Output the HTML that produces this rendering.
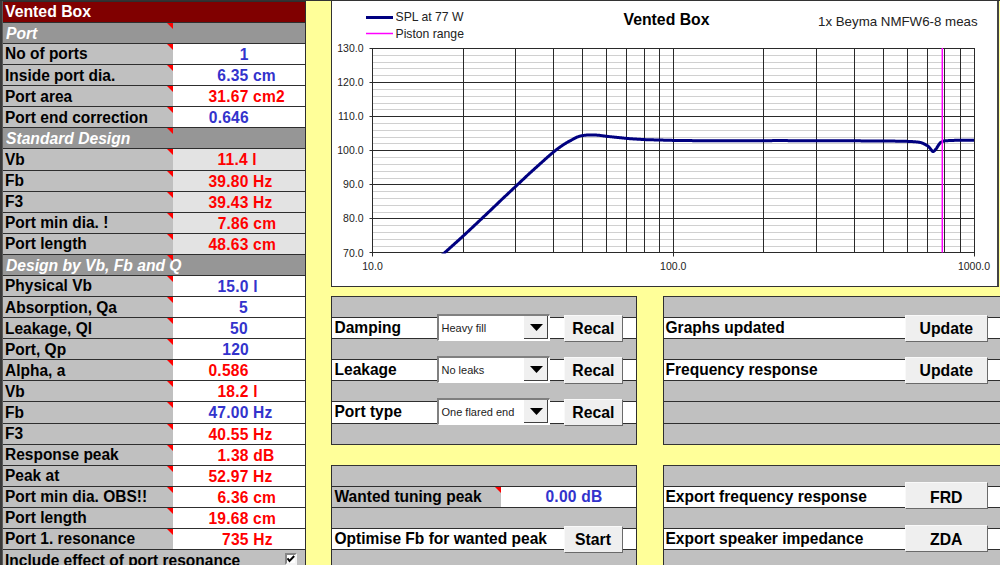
<!DOCTYPE html><html><head><meta charset="utf-8"><style>
html,body{margin:0;padding:0;}
body{width:1000px;height:565px;position:relative;overflow:hidden;background:#ffff99;font-family:"Liberation Sans",sans-serif;}
div,span,svg{position:absolute;}
.t{white-space:nowrap;line-height:1;}
</style></head><body>
<div style="left:306px;top:0px;width:694px;height:565px;background:#ffff99;"></div>
<div style="left:3px;top:1px;width:302px;height:21px;background:#800000;"></div>
<span class="t" style="left:5px;top:4px;font-size:15.8px;color:#fff;font-weight:bold;font-style:normal;">Vented Box</span>
<div style="left:3px;top:1px;width:302px;height:1px;background:#2e2e2e;"></div>
<div style="left:3px;top:22px;width:302px;height:21px;background:#969696;"></div>
<span class="t" style="left:6px;top:26px;font-size:15.65px;color:#fff;font-weight:bold;font-style:italic;transform:scaleY(1.07);transform-origin:0 13px;">Port</span>
<div style="left:167px;top:23px;width:0;height:0;border-top:6px solid #ff0000;border-left:6px solid transparent;"></div>
<div style="left:3px;top:22px;width:302px;height:1px;background:#2e2e2e;"></div>
<div style="left:3px;top:43px;width:170px;height:21px;background:#c0c0c0;"></div>
<div style="left:173px;top:43px;width:132px;height:21px;background:#fff;"></div>
<span class="t" style="left:5px;top:46px;font-size:15.5px;color:#000;font-weight:bold;font-style:normal;transform:scaleY(1.07);transform-origin:0 13px;">No of ports</span>
<span class="t" style="left:239.8px;top:47px;font-size:15.6px;color:#3333cc;font-weight:bold;font-style:normal;transform:scaleY(1.07);transform-origin:0 13px;letter-spacing:0.2px;">1</span>
<div style="left:167px;top:44px;width:0;height:0;border-top:6px solid #ff0000;border-left:6px solid transparent;"></div>
<div style="left:3px;top:43px;width:302px;height:1px;background:#2e2e2e;"></div>
<div style="left:3px;top:64px;width:170px;height:21px;background:#c0c0c0;"></div>
<div style="left:173px;top:64px;width:132px;height:21px;background:#fff;"></div>
<span class="t" style="left:5px;top:68px;font-size:15.5px;color:#000;font-weight:bold;font-style:normal;transform:scaleY(1.07);transform-origin:0 13px;">Inside port dia.</span>
<span class="t" style="left:217.3px;top:68px;font-size:15.6px;color:#3333cc;font-weight:bold;font-style:normal;transform:scaleY(1.07);transform-origin:0 13px;letter-spacing:0.2px;">6.35 cm</span>
<div style="left:167px;top:65px;width:0;height:0;border-top:6px solid #ff0000;border-left:6px solid transparent;"></div>
<div style="left:3px;top:64px;width:302px;height:1px;background:#2e2e2e;"></div>
<div style="left:3px;top:85px;width:170px;height:21px;background:#c0c0c0;"></div>
<div style="left:173px;top:85px;width:132px;height:21px;background:#fff;"></div>
<span class="t" style="left:5px;top:89px;font-size:15.5px;color:#000;font-weight:bold;font-style:normal;transform:scaleY(1.07);transform-origin:0 13px;">Port area</span>
<span class="t" style="left:208.5px;top:89px;font-size:15.6px;color:#ff0000;font-weight:bold;font-style:normal;transform:scaleY(1.07);transform-origin:0 13px;letter-spacing:0.2px;">31.67 cm2</span>
<div style="left:167px;top:86px;width:0;height:0;border-top:6px solid #ff0000;border-left:6px solid transparent;"></div>
<div style="left:3px;top:85px;width:302px;height:1px;background:#2e2e2e;"></div>
<div style="left:3px;top:106px;width:170px;height:21px;background:#c0c0c0;"></div>
<div style="left:173px;top:106px;width:132px;height:21px;background:#fff;"></div>
<span class="t" style="left:5px;top:110px;font-size:15.5px;color:#000;font-weight:bold;font-style:normal;transform:scaleY(1.07);transform-origin:0 13px;">Port end correction</span>
<span class="t" style="left:208.8px;top:110px;font-size:15.6px;color:#3333cc;font-weight:bold;font-style:normal;transform:scaleY(1.07);transform-origin:0 13px;letter-spacing:0.2px;">0.646</span>
<div style="left:167px;top:107px;width:0;height:0;border-top:6px solid #ff0000;border-left:6px solid transparent;"></div>
<div style="left:3px;top:106px;width:302px;height:1px;background:#2e2e2e;"></div>
<div style="left:3px;top:127px;width:302px;height:21px;background:#969696;"></div>
<span class="t" style="left:6px;top:131px;font-size:15.65px;color:#fff;font-weight:bold;font-style:italic;transform:scaleY(1.07);transform-origin:0 13px;">Standard Design</span>
<div style="left:167px;top:128px;width:0;height:0;border-top:6px solid #ff0000;border-left:6px solid transparent;"></div>
<div style="left:3px;top:127px;width:302px;height:1px;background:#2e2e2e;"></div>
<div style="left:3px;top:148px;width:170px;height:22px;background:#c0c0c0;"></div>
<div style="left:173px;top:148px;width:132px;height:22px;background:#e3e3e3;"></div>
<span class="t" style="left:5px;top:152px;font-size:15.5px;color:#000;font-weight:bold;font-style:normal;transform:scaleY(1.07);transform-origin:0 13px;">Vb</span>
<span class="t" style="left:217.5px;top:152px;font-size:15.6px;color:#ff0000;font-weight:bold;font-style:normal;transform:scaleY(1.07);transform-origin:0 13px;letter-spacing:0.2px;">11.4 l</span>
<div style="left:167px;top:149px;width:0;height:0;border-top:6px solid #ff0000;border-left:6px solid transparent;"></div>
<div style="left:3px;top:148px;width:302px;height:1px;background:#2e2e2e;"></div>
<div style="left:3px;top:170px;width:170px;height:21px;background:#c0c0c0;"></div>
<div style="left:173px;top:170px;width:132px;height:21px;background:#e3e3e3;"></div>
<span class="t" style="left:5px;top:173px;font-size:15.5px;color:#000;font-weight:bold;font-style:normal;transform:scaleY(1.07);transform-origin:0 13px;">Fb</span>
<span class="t" style="left:208.5px;top:174px;font-size:15.6px;color:#ff0000;font-weight:bold;font-style:normal;transform:scaleY(1.07);transform-origin:0 13px;letter-spacing:0.2px;">39.80 Hz</span>
<div style="left:167px;top:171px;width:0;height:0;border-top:6px solid #ff0000;border-left:6px solid transparent;"></div>
<div style="left:3px;top:170px;width:302px;height:1px;background:#2e2e2e;"></div>
<div style="left:3px;top:191px;width:170px;height:21px;background:#c0c0c0;"></div>
<div style="left:173px;top:191px;width:132px;height:21px;background:#e3e3e3;"></div>
<span class="t" style="left:5px;top:194px;font-size:15.5px;color:#000;font-weight:bold;font-style:normal;transform:scaleY(1.07);transform-origin:0 13px;">F3</span>
<span class="t" style="left:208.5px;top:195px;font-size:15.6px;color:#ff0000;font-weight:bold;font-style:normal;transform:scaleY(1.07);transform-origin:0 13px;letter-spacing:0.2px;">39.43 Hz</span>
<div style="left:167px;top:192px;width:0;height:0;border-top:6px solid #ff0000;border-left:6px solid transparent;"></div>
<div style="left:3px;top:191px;width:302px;height:1px;background:#2e2e2e;"></div>
<div style="left:3px;top:212px;width:170px;height:21px;background:#c0c0c0;"></div>
<div style="left:173px;top:212px;width:132px;height:21px;background:#e3e3e3;"></div>
<span class="t" style="left:5px;top:215px;font-size:15.5px;color:#000;font-weight:bold;font-style:normal;transform:scaleY(1.07);transform-origin:0 13px;">Port min dia. !</span>
<span class="t" style="left:217.70000000000002px;top:216px;font-size:15.6px;color:#ff0000;font-weight:bold;font-style:normal;transform:scaleY(1.07);transform-origin:0 13px;letter-spacing:0.2px;">7.86 cm</span>
<div style="left:167px;top:213px;width:0;height:0;border-top:6px solid #ff0000;border-left:6px solid transparent;"></div>
<div style="left:3px;top:212px;width:302px;height:1px;background:#2e2e2e;"></div>
<div style="left:3px;top:233px;width:170px;height:21px;background:#c0c0c0;"></div>
<div style="left:173px;top:233px;width:132px;height:21px;background:#e3e3e3;"></div>
<span class="t" style="left:5px;top:236px;font-size:15.5px;color:#000;font-weight:bold;font-style:normal;transform:scaleY(1.07);transform-origin:0 13px;">Port length</span>
<span class="t" style="left:208.5px;top:237px;font-size:15.6px;color:#ff0000;font-weight:bold;font-style:normal;transform:scaleY(1.07);transform-origin:0 13px;letter-spacing:0.2px;">48.63 cm</span>
<div style="left:167px;top:234px;width:0;height:0;border-top:6px solid #ff0000;border-left:6px solid transparent;"></div>
<div style="left:3px;top:233px;width:302px;height:1px;background:#2e2e2e;"></div>
<div style="left:3px;top:254px;width:302px;height:21px;background:#969696;"></div>
<span class="t" style="left:6px;top:258px;font-size:15.65px;color:#fff;font-weight:bold;font-style:italic;transform:scaleY(1.07);transform-origin:0 13px;">Design by Vb, Fb and Q</span>
<div style="left:167px;top:255px;width:0;height:0;border-top:6px solid #ff0000;border-left:6px solid transparent;"></div>
<div style="left:3px;top:254px;width:302px;height:1px;background:#2e2e2e;"></div>
<div style="left:3px;top:275px;width:170px;height:21px;background:#c0c0c0;"></div>
<div style="left:173px;top:275px;width:132px;height:21px;background:#fff;"></div>
<span class="t" style="left:5px;top:278px;font-size:15.5px;color:#000;font-weight:bold;font-style:normal;transform:scaleY(1.07);transform-origin:0 13px;">Physical Vb</span>
<span class="t" style="left:217.5px;top:279px;font-size:15.6px;color:#3333cc;font-weight:bold;font-style:normal;transform:scaleY(1.07);transform-origin:0 13px;letter-spacing:0.2px;">15.0 l</span>
<div style="left:167px;top:276px;width:0;height:0;border-top:6px solid #ff0000;border-left:6px solid transparent;"></div>
<div style="left:3px;top:275px;width:302px;height:1px;background:#2e2e2e;"></div>
<div style="left:3px;top:296px;width:170px;height:21px;background:#c0c0c0;"></div>
<div style="left:173px;top:296px;width:132px;height:21px;background:#fff;"></div>
<span class="t" style="left:5px;top:300px;font-size:15.5px;color:#000;font-weight:bold;font-style:normal;transform:scaleY(1.07);transform-origin:0 13px;">Absorption, Qa</span>
<span class="t" style="left:238.9px;top:300px;font-size:15.6px;color:#3333cc;font-weight:bold;font-style:normal;transform:scaleY(1.07);transform-origin:0 13px;letter-spacing:0.2px;">5</span>
<div style="left:167px;top:297px;width:0;height:0;border-top:6px solid #ff0000;border-left:6px solid transparent;"></div>
<div style="left:3px;top:296px;width:302px;height:1px;background:#2e2e2e;"></div>
<div style="left:3px;top:317px;width:170px;height:21px;background:#c0c0c0;"></div>
<div style="left:173px;top:317px;width:132px;height:21px;background:#fff;"></div>
<span class="t" style="left:5px;top:321px;font-size:15.5px;color:#000;font-weight:bold;font-style:normal;transform:scaleY(1.07);transform-origin:0 13px;">Leakage, Ql</span>
<span class="t" style="left:230.10000000000002px;top:321px;font-size:15.6px;color:#3333cc;font-weight:bold;font-style:normal;transform:scaleY(1.07);transform-origin:0 13px;letter-spacing:0.2px;">50</span>
<div style="left:167px;top:318px;width:0;height:0;border-top:6px solid #ff0000;border-left:6px solid transparent;"></div>
<div style="left:3px;top:317px;width:302px;height:1px;background:#2e2e2e;"></div>
<div style="left:3px;top:338px;width:170px;height:21px;background:#c0c0c0;"></div>
<div style="left:173px;top:338px;width:132px;height:21px;background:#fff;"></div>
<span class="t" style="left:5px;top:342px;font-size:15.5px;color:#000;font-weight:bold;font-style:normal;transform:scaleY(1.07);transform-origin:0 13px;">Port, Qp</span>
<span class="t" style="left:222.3px;top:342px;font-size:15.6px;color:#3333cc;font-weight:bold;font-style:normal;transform:scaleY(1.07);transform-origin:0 13px;letter-spacing:0.2px;">120</span>
<div style="left:167px;top:339px;width:0;height:0;border-top:6px solid #ff0000;border-left:6px solid transparent;"></div>
<div style="left:3px;top:338px;width:302px;height:1px;background:#2e2e2e;"></div>
<div style="left:3px;top:359px;width:170px;height:21px;background:#c0c0c0;"></div>
<div style="left:173px;top:359px;width:132px;height:21px;background:#fff;"></div>
<span class="t" style="left:5px;top:363px;font-size:15.5px;color:#000;font-weight:bold;font-style:normal;transform:scaleY(1.07);transform-origin:0 13px;">Alpha, a</span>
<span class="t" style="left:208.5px;top:363px;font-size:15.6px;color:#ff0000;font-weight:bold;font-style:normal;transform:scaleY(1.07);transform-origin:0 13px;letter-spacing:0.2px;">0.586</span>
<div style="left:167px;top:360px;width:0;height:0;border-top:6px solid #ff0000;border-left:6px solid transparent;"></div>
<div style="left:3px;top:359px;width:302px;height:1px;background:#2e2e2e;"></div>
<div style="left:3px;top:380px;width:170px;height:21px;background:#c0c0c0;"></div>
<div style="left:173px;top:380px;width:132px;height:21px;background:#fff;"></div>
<span class="t" style="left:5px;top:384px;font-size:15.5px;color:#000;font-weight:bold;font-style:normal;transform:scaleY(1.07);transform-origin:0 13px;">Vb</span>
<span class="t" style="left:217.5px;top:384px;font-size:15.6px;color:#ff0000;font-weight:bold;font-style:normal;transform:scaleY(1.07);transform-origin:0 13px;letter-spacing:0.2px;">18.2 l</span>
<div style="left:167px;top:381px;width:0;height:0;border-top:6px solid #ff0000;border-left:6px solid transparent;"></div>
<div style="left:3px;top:380px;width:302px;height:1px;background:#2e2e2e;"></div>
<div style="left:3px;top:401px;width:170px;height:22px;background:#c0c0c0;"></div>
<div style="left:173px;top:401px;width:132px;height:22px;background:#fff;"></div>
<span class="t" style="left:5px;top:405px;font-size:15.5px;color:#000;font-weight:bold;font-style:normal;transform:scaleY(1.07);transform-origin:0 13px;">Fb</span>
<span class="t" style="left:208.5px;top:405px;font-size:15.6px;color:#3333cc;font-weight:bold;font-style:normal;transform:scaleY(1.07);transform-origin:0 13px;letter-spacing:0.2px;">47.00 Hz</span>
<div style="left:167px;top:402px;width:0;height:0;border-top:6px solid #ff0000;border-left:6px solid transparent;"></div>
<div style="left:3px;top:401px;width:302px;height:1px;background:#2e2e2e;"></div>
<div style="left:3px;top:423px;width:170px;height:21px;background:#c0c0c0;"></div>
<div style="left:173px;top:423px;width:132px;height:21px;background:#fff;"></div>
<span class="t" style="left:5px;top:426px;font-size:15.5px;color:#000;font-weight:bold;font-style:normal;transform:scaleY(1.07);transform-origin:0 13px;">F3</span>
<span class="t" style="left:208.5px;top:427px;font-size:15.6px;color:#ff0000;font-weight:bold;font-style:normal;transform:scaleY(1.07);transform-origin:0 13px;letter-spacing:0.2px;">40.55 Hz</span>
<div style="left:167px;top:424px;width:0;height:0;border-top:6px solid #ff0000;border-left:6px solid transparent;"></div>
<div style="left:3px;top:423px;width:302px;height:1px;background:#2e2e2e;"></div>
<div style="left:3px;top:444px;width:170px;height:21px;background:#c0c0c0;"></div>
<div style="left:173px;top:444px;width:132px;height:21px;background:#fff;"></div>
<span class="t" style="left:5px;top:447px;font-size:15.5px;color:#000;font-weight:bold;font-style:normal;transform:scaleY(1.07);transform-origin:0 13px;">Response peak</span>
<span class="t" style="left:217.5px;top:448px;font-size:15.6px;color:#ff0000;font-weight:bold;font-style:normal;transform:scaleY(1.07);transform-origin:0 13px;letter-spacing:0.2px;">1.38 dB</span>
<div style="left:167px;top:445px;width:0;height:0;border-top:6px solid #ff0000;border-left:6px solid transparent;"></div>
<div style="left:3px;top:444px;width:302px;height:1px;background:#2e2e2e;"></div>
<div style="left:3px;top:465px;width:170px;height:21px;background:#c0c0c0;"></div>
<div style="left:173px;top:465px;width:132px;height:21px;background:#fff;"></div>
<span class="t" style="left:5px;top:468px;font-size:15.5px;color:#000;font-weight:bold;font-style:normal;transform:scaleY(1.07);transform-origin:0 13px;">Peak at</span>
<span class="t" style="left:208.5px;top:469px;font-size:15.6px;color:#ff0000;font-weight:bold;font-style:normal;transform:scaleY(1.07);transform-origin:0 13px;letter-spacing:0.2px;">52.97 Hz</span>
<div style="left:167px;top:466px;width:0;height:0;border-top:6px solid #ff0000;border-left:6px solid transparent;"></div>
<div style="left:3px;top:465px;width:302px;height:1px;background:#2e2e2e;"></div>
<div style="left:3px;top:486px;width:170px;height:21px;background:#c0c0c0;"></div>
<div style="left:173px;top:486px;width:132px;height:21px;background:#fff;"></div>
<span class="t" style="left:5px;top:489px;font-size:15.5px;color:#000;font-weight:bold;font-style:normal;transform:scaleY(1.07);transform-origin:0 13px;">Port min dia. OBS!!</span>
<span class="t" style="left:217.5px;top:490px;font-size:15.6px;color:#ff0000;font-weight:bold;font-style:normal;transform:scaleY(1.07);transform-origin:0 13px;letter-spacing:0.2px;">6.36 cm</span>
<div style="left:167px;top:487px;width:0;height:0;border-top:6px solid #ff0000;border-left:6px solid transparent;"></div>
<div style="left:3px;top:486px;width:302px;height:1px;background:#2e2e2e;"></div>
<div style="left:3px;top:507px;width:170px;height:21px;background:#c0c0c0;"></div>
<div style="left:173px;top:507px;width:132px;height:21px;background:#fff;"></div>
<span class="t" style="left:5px;top:510px;font-size:15.5px;color:#000;font-weight:bold;font-style:normal;transform:scaleY(1.07);transform-origin:0 13px;">Port length</span>
<span class="t" style="left:208.5px;top:511px;font-size:15.6px;color:#ff0000;font-weight:bold;font-style:normal;transform:scaleY(1.07);transform-origin:0 13px;letter-spacing:0.2px;">19.68 cm</span>
<div style="left:167px;top:508px;width:0;height:0;border-top:6px solid #ff0000;border-left:6px solid transparent;"></div>
<div style="left:3px;top:507px;width:302px;height:1px;background:#2e2e2e;"></div>
<div style="left:3px;top:528px;width:170px;height:21px;background:#c0c0c0;"></div>
<div style="left:173px;top:528px;width:132px;height:21px;background:#fff;"></div>
<span class="t" style="left:5px;top:531px;font-size:15.5px;color:#000;font-weight:bold;font-style:normal;transform:scaleY(1.07);transform-origin:0 13px;">Port 1. resonance</span>
<span class="t" style="left:222.10000000000002px;top:532px;font-size:15.6px;color:#ff0000;font-weight:bold;font-style:normal;transform:scaleY(1.07);transform-origin:0 13px;letter-spacing:0.2px;">735 Hz</span>
<div style="left:167px;top:529px;width:0;height:0;border-top:6px solid #ff0000;border-left:6px solid transparent;"></div>
<div style="left:3px;top:528px;width:302px;height:1px;background:#2e2e2e;"></div>
<div style="left:3px;top:549px;width:302px;height:16px;background:#c0c0c0;"></div>
<span class="t" style="left:5px;top:553px;font-size:15.5px;color:#000;font-weight:bold;font-style:normal;transform:scaleY(1.07);transform-origin:0 13px;">Include effect of port resonance</span>
<div style="left:285px;top:553px;width:8px;height:8px;background:#fff;border-top:2px solid #858585;border-left:2px solid #858585;border-right:2px solid #f4f4f4;border-bottom:2px solid #f4f4f4;"></div>
<svg style="left:287px;top:555px" width="10" height="10" viewBox="0 0 10 10"><path d="M0.5 3.3 L2.5 6.0 L7.2 1.0" stroke="#000" stroke-width="1.9" fill="none"/></svg>
<div style="left:3px;top:549px;width:302px;height:1px;background:#2e2e2e;"></div>
<div style="left:305px;top:0px;width:1px;height:565px;background:#2e2e2e;"></div>
<div style="left:0px;top:0px;width:2px;height:565px;background:#3a3a3a;"></div>
<div style="left:2px;top:0px;width:1px;height:565px;background:#5a5a5a;"></div>
<div style="left:331px;top:0px;width:665px;height:285px;background:#fff;border:1px solid #333;border-right:2px solid #444;"></div>
<svg style="left:0;top:0" width="1000" height="300" viewBox="0 0 1000 300"><line x1="372.5" y1="246.5" x2="974.0" y2="246.5" stroke="#d0d0d0" stroke-width="1"/><line x1="372.5" y1="239.5" x2="974.0" y2="239.5" stroke="#d0d0d0" stroke-width="1"/><line x1="372.5" y1="232.5" x2="974.0" y2="232.5" stroke="#d0d0d0" stroke-width="1"/><line x1="372.5" y1="225.5" x2="974.0" y2="225.5" stroke="#d0d0d0" stroke-width="1"/><line x1="372.5" y1="212.5" x2="974.0" y2="212.5" stroke="#d0d0d0" stroke-width="1"/><line x1="372.5" y1="205.5" x2="974.0" y2="205.5" stroke="#d0d0d0" stroke-width="1"/><line x1="372.5" y1="198.5" x2="974.0" y2="198.5" stroke="#d0d0d0" stroke-width="1"/><line x1="372.5" y1="191.5" x2="974.0" y2="191.5" stroke="#d0d0d0" stroke-width="1"/><line x1="372.5" y1="178.5" x2="974.0" y2="178.5" stroke="#d0d0d0" stroke-width="1"/><line x1="372.5" y1="171.5" x2="974.0" y2="171.5" stroke="#d0d0d0" stroke-width="1"/><line x1="372.5" y1="164.5" x2="974.0" y2="164.5" stroke="#d0d0d0" stroke-width="1"/><line x1="372.5" y1="157.5" x2="974.0" y2="157.5" stroke="#d0d0d0" stroke-width="1"/><line x1="372.5" y1="143.5" x2="974.0" y2="143.5" stroke="#d0d0d0" stroke-width="1"/><line x1="372.5" y1="137.5" x2="974.0" y2="137.5" stroke="#d0d0d0" stroke-width="1"/><line x1="372.5" y1="130.5" x2="974.0" y2="130.5" stroke="#d0d0d0" stroke-width="1"/><line x1="372.5" y1="123.5" x2="974.0" y2="123.5" stroke="#d0d0d0" stroke-width="1"/><line x1="372.5" y1="109.5" x2="974.0" y2="109.5" stroke="#d0d0d0" stroke-width="1"/><line x1="372.5" y1="103.5" x2="974.0" y2="103.5" stroke="#d0d0d0" stroke-width="1"/><line x1="372.5" y1="96.5" x2="974.0" y2="96.5" stroke="#d0d0d0" stroke-width="1"/><line x1="372.5" y1="89.5" x2="974.0" y2="89.5" stroke="#d0d0d0" stroke-width="1"/><line x1="372.5" y1="75.5" x2="974.0" y2="75.5" stroke="#d0d0d0" stroke-width="1"/><line x1="372.5" y1="68.5" x2="974.0" y2="68.5" stroke="#d0d0d0" stroke-width="1"/><line x1="372.5" y1="62.5" x2="974.0" y2="62.5" stroke="#d0d0d0" stroke-width="1"/><line x1="372.5" y1="55.5" x2="974.0" y2="55.5" stroke="#d0d0d0" stroke-width="1"/><line x1="369.5" y1="252.5" x2="974.0" y2="252.5" stroke="#2a2a2a" stroke-width="1"/><line x1="369.5" y1="218.5" x2="974.0" y2="218.5" stroke="#2a2a2a" stroke-width="1"/><line x1="369.5" y1="184.5" x2="974.0" y2="184.5" stroke="#2a2a2a" stroke-width="1"/><line x1="369.5" y1="150.5" x2="974.0" y2="150.5" stroke="#2a2a2a" stroke-width="1"/><line x1="369.5" y1="116.5" x2="974.0" y2="116.5" stroke="#2a2a2a" stroke-width="1"/><line x1="369.5" y1="82.5" x2="974.0" y2="82.5" stroke="#2a2a2a" stroke-width="1"/><line x1="369.5" y1="48.5" x2="974.0" y2="48.5" stroke="#2a2a2a" stroke-width="1"/><line x1="372.5" y1="48.0" x2="372.5" y2="256.5" stroke="#2a2a2a" stroke-width="1"/><line x1="463.5" y1="48.0" x2="463.5" y2="252.5" stroke="#2a2a2a" stroke-width="1"/><line x1="515.5" y1="48.0" x2="515.5" y2="252.5" stroke="#2a2a2a" stroke-width="1"/><line x1="553.5" y1="48.0" x2="553.5" y2="252.5" stroke="#2a2a2a" stroke-width="1"/><line x1="582.5" y1="48.0" x2="582.5" y2="252.5" stroke="#2a2a2a" stroke-width="1"/><line x1="606.5" y1="48.0" x2="606.5" y2="252.5" stroke="#2a2a2a" stroke-width="1"/><line x1="626.5" y1="48.0" x2="626.5" y2="252.5" stroke="#2a2a2a" stroke-width="1"/><line x1="644.5" y1="48.0" x2="644.5" y2="252.5" stroke="#2a2a2a" stroke-width="1"/><line x1="659.5" y1="48.0" x2="659.5" y2="252.5" stroke="#2a2a2a" stroke-width="1"/><line x1="673.5" y1="48.0" x2="673.5" y2="256.5" stroke="#2a2a2a" stroke-width="1"/><line x1="763.5" y1="48.0" x2="763.5" y2="252.5" stroke="#2a2a2a" stroke-width="1"/><line x1="816.5" y1="48.0" x2="816.5" y2="252.5" stroke="#2a2a2a" stroke-width="1"/><line x1="854.5" y1="48.0" x2="854.5" y2="252.5" stroke="#2a2a2a" stroke-width="1"/><line x1="883.5" y1="48.0" x2="883.5" y2="252.5" stroke="#2a2a2a" stroke-width="1"/><line x1="907.5" y1="48.0" x2="907.5" y2="252.5" stroke="#2a2a2a" stroke-width="1"/><line x1="927.5" y1="48.0" x2="927.5" y2="252.5" stroke="#2a2a2a" stroke-width="1"/><line x1="944.5" y1="48.0" x2="944.5" y2="252.5" stroke="#2a2a2a" stroke-width="1"/><line x1="960.5" y1="48.0" x2="960.5" y2="252.5" stroke="#2a2a2a" stroke-width="1"/><line x1="974.5" y1="48.0" x2="974.5" y2="256.5" stroke="#2a2a2a" stroke-width="1"/><defs><clipPath id="pc"><rect x="372" y="40" width="603" height="213.5"/></clipPath></defs><path d="M442.0,255.10 L442.5,254.65 L443.0,254.20 L443.5,253.75 L444.0,253.30 L444.5,252.86 L445.0,252.41 L445.5,251.96 L446.0,251.51 L446.5,251.06 L447.0,250.61 L447.5,250.16 L448.0,249.71 L448.5,249.27 L449.0,248.82 L449.5,248.37 L450.0,247.92 L450.5,247.47 L451.0,247.02 L451.5,246.57 L452.0,246.12 L452.5,245.67 L453.0,245.23 L453.5,244.78 L454.0,244.33 L454.5,243.88 L455.0,243.43 L455.5,242.98 L456.0,242.53 L456.5,242.08 L457.0,241.63 L457.5,241.18 L458.0,240.73 L458.5,240.28 L459.0,239.83 L459.5,239.38 L460.0,238.93 L460.5,238.48 L461.0,238.03 L461.5,237.58 L462.0,237.13 L462.5,236.68 L463.0,236.22 L463.5,235.75 L464.0,235.28 L464.5,234.81 L465.0,234.35 L465.5,233.88 L466.0,233.41 L466.5,232.94 L467.0,232.47 L467.5,232.00 L468.0,231.53 L468.5,231.06 L469.0,230.59 L469.5,230.13 L470.0,229.66 L470.5,229.19 L471.0,228.72 L471.5,228.25 L472.0,227.78 L472.5,227.31 L473.0,226.84 L473.5,226.37 L474.0,225.90 L474.5,225.43 L475.0,224.96 L475.5,224.48 L476.0,224.01 L476.5,223.54 L477.0,223.07 L477.5,222.60 L478.0,222.13 L478.5,221.66 L479.0,221.19 L479.5,220.71 L480.0,220.24 L480.5,219.77 L481.0,219.30 L481.5,218.82 L482.0,218.35 L482.5,217.88 L483.0,217.41 L483.5,216.93 L484.0,216.46 L484.5,215.99 L485.0,215.51 L485.5,215.04 L486.0,214.56 L486.5,214.09 L487.0,213.61 L487.5,213.14 L488.0,212.66 L488.5,212.19 L489.0,211.71 L489.5,211.24 L490.0,210.76 L490.5,210.29 L491.0,209.81 L491.5,209.33 L492.0,208.86 L492.5,208.38 L493.0,207.90 L493.5,207.43 L494.0,206.95 L494.5,206.47 L495.0,205.99 L495.5,205.51 L496.0,205.04 L496.5,204.56 L497.0,204.08 L497.5,203.60 L498.0,203.12 L498.5,202.64 L499.0,202.16 L499.5,201.68 L500.0,201.20 L500.5,200.72 L501.0,200.23 L501.5,199.75 L502.0,199.27 L502.5,198.79 L503.0,198.31 L503.5,197.85 L504.0,197.38 L504.5,196.91 L505.0,196.45 L505.5,195.98 L506.0,195.51 L506.5,195.04 L507.0,194.57 L507.5,194.10 L508.0,193.64 L508.5,193.17 L509.0,192.70 L509.5,192.23 L510.0,191.76 L510.5,191.28 L511.0,190.81 L511.5,190.34 L512.0,189.87 L512.5,189.40 L513.0,188.93 L513.5,188.45 L514.0,187.98 L514.5,187.51 L515.0,187.03 L515.5,186.56 L516.0,186.08 L516.5,185.61 L517.0,185.15 L517.5,184.68 L518.0,184.21 L518.5,183.74 L519.0,183.27 L519.5,182.80 L520.0,182.33 L520.5,181.86 L521.0,181.39 L521.5,180.92 L522.0,180.45 L522.5,179.98 L523.0,179.51 L523.5,179.04 L524.0,178.56 L524.5,178.09 L525.0,177.62 L525.5,177.15 L526.0,176.68 L526.5,176.20 L527.0,175.73 L527.5,175.26 L528.0,174.78 L528.5,174.32 L529.0,173.87 L529.5,173.41 L530.0,172.96 L530.5,172.51 L531.0,172.05 L531.5,171.60 L532.0,171.15 L532.5,170.69 L533.0,170.24 L533.5,169.79 L534.0,169.34 L534.5,168.88 L535.0,168.43 L535.5,167.98 L536.0,167.53 L536.5,167.07 L537.0,166.62 L537.5,166.17 L538.0,165.72 L538.5,165.27 L539.0,164.82 L539.5,164.38 L540.0,163.93 L540.5,163.48 L541.0,163.03 L541.5,162.59 L542.0,162.14 L542.5,161.70 L543.0,161.24 L543.5,160.79 L544.0,160.33 L544.5,159.88 L545.0,159.43 L545.5,158.98 L546.0,158.53 L546.5,158.08 L547.0,157.64 L547.5,157.19 L548.0,156.75 L548.5,156.31 L549.0,155.87 L549.5,155.44 L550.0,155.01 L550.5,154.57 L551.0,154.15 L551.5,153.72 L552.0,153.30 L552.5,152.88 L553.0,152.46 L553.5,152.05 L554.0,151.64 L554.5,151.24 L555.0,150.84 L555.5,150.44 L556.0,150.05 L556.5,149.66 L557.0,149.28 L557.5,148.90 L558.0,148.52 L558.5,148.15 L559.0,147.79 L559.5,147.43 L560.0,147.07 L560.5,146.72 L561.0,146.37 L561.5,146.03 L562.0,145.70 L562.5,145.36 L563.0,145.02 L563.5,144.68 L564.0,144.35 L564.5,144.03 L565.0,143.71 L565.5,143.39 L566.0,143.09 L566.5,142.79 L567.0,142.50 L567.5,142.21 L568.0,141.93 L568.5,141.66 L569.0,141.40 L569.5,141.14 L570.0,140.89 L570.5,140.64 L571.0,140.38 L571.5,140.07 L572.0,139.78 L572.5,139.49 L573.0,139.21 L573.5,138.94 L574.0,138.67 L574.5,138.41 L575.0,138.16 L575.5,137.91 L576.0,137.67 L576.5,137.44 L577.0,137.21 L577.5,136.99 L578.0,136.78 L578.5,136.58 L579.0,136.38 L579.5,136.23 L580.0,136.11 L580.5,136.00 L581.0,135.89 L581.5,135.79 L582.0,135.70 L582.5,135.61 L583.0,135.53 L583.5,135.45 L584.0,135.38 L584.5,135.31 L585.0,135.25 L585.5,135.19 L586.0,135.14 L586.5,135.09 L587.0,135.04 L587.5,135.00 L588.0,134.97 L588.5,134.93 L589.0,134.91 L589.5,134.90 L590.0,134.89 L590.5,134.89 L591.0,134.90 L591.5,134.91 L592.0,134.92 L592.5,134.93 L593.0,134.94 L593.5,134.96 L594.0,134.98 L594.5,135.01 L595.0,135.03 L595.5,135.06 L596.0,135.09 L596.5,135.12 L597.0,135.15 L597.5,135.19 L598.0,135.22 L598.5,135.26 L599.0,135.30 L599.5,135.36 L600.0,135.42 L600.5,135.49 L601.0,135.55 L601.5,135.62 L602.0,135.68 L602.5,135.75 L603.0,135.82 L603.5,135.89 L604.0,135.96 L604.5,136.03 L605.0,136.10 L605.5,136.17 L606.0,136.24 L606.5,136.31 L607.0,136.36 L607.5,136.41 L608.0,136.46 L608.5,136.51 L609.0,136.56 L609.5,136.62 L610.0,136.67 L610.5,136.72 L611.0,136.77 L611.5,136.82 L612.0,136.88 L612.5,136.93 L613.0,136.98 L613.5,137.03 L614.0,137.09 L614.5,137.14 L615.0,137.19 L615.5,137.24 L616.0,137.29 L616.5,137.34 L617.0,137.40 L617.5,137.45 L618.0,137.50 L618.5,137.55 L619.0,137.60 L619.5,137.65 L620.0,137.70 L620.5,137.75 L621.0,137.81 L621.5,137.86 L622.0,137.92 L622.5,137.97 L623.0,138.02 L623.5,138.08 L624.0,138.13 L624.5,138.18 L625.0,138.24 L625.5,138.29 L626.0,138.34 L626.5,138.39 L627.0,138.43 L627.5,138.47 L628.0,138.51 L628.5,138.55 L629.0,138.59 L629.5,138.63 L630.0,138.66 L630.5,138.70 L631.0,138.74 L631.5,138.78 L632.0,138.81 L632.5,138.85 L633.0,138.88 L633.5,138.92 L634.0,138.95 L634.5,138.99 L635.0,139.02 L635.5,139.06 L636.0,139.09 L636.5,139.12 L637.0,139.16 L637.5,139.19 L638.0,139.22 L638.5,139.25 L639.0,139.28 L639.5,139.31 L640.0,139.34 L640.5,139.37 L641.0,139.40 L641.5,139.43 L642.0,139.46 L642.5,139.49 L643.0,139.52 L643.5,139.55 L644.0,139.58 L644.5,139.60 L645.0,139.62 L645.5,139.64 L646.0,139.65 L646.5,139.67 L647.0,139.69 L647.5,139.70 L648.0,139.72 L648.5,139.73 L649.0,139.75 L649.5,139.76 L650.0,139.78 L650.5,139.79 L651.0,139.81 L651.5,139.82 L652.0,139.83 L652.5,139.84 L653.0,139.86 L653.5,139.87 L654.0,139.88 L654.5,139.89 L655.0,139.91 L655.5,139.92 L656.0,139.93 L656.5,139.94 L657.0,139.95 L657.5,139.96 L658.0,139.97 L658.5,139.98 L659.0,139.99 L659.5,140.00 L660.0,140.01 L660.5,140.03 L661.0,140.05 L661.5,140.06 L662.0,140.08 L662.5,140.10 L663.0,140.11 L663.5,140.13 L664.0,140.14 L664.5,140.16 L665.0,140.17 L665.5,140.19 L666.0,140.20 L666.5,140.22 L667.0,140.23 L667.5,140.25 L668.0,140.26 L668.5,140.27 L669.0,140.29 L669.5,140.30 L670.0,140.31 L670.5,140.33 L671.0,140.34 L671.5,140.35 L672.0,140.37 L672.5,140.38 L673.0,140.39 L673.5,140.40 L674.0,140.41 L674.5,140.42 L675.0,140.43 L675.5,140.43 L676.0,140.44 L676.5,140.45 L677.0,140.46 L677.5,140.46 L678.0,140.47 L678.5,140.48 L679.0,140.49 L679.5,140.49 L680.0,140.50 L680.5,140.51 L681.0,140.51 L681.5,140.52 L682.0,140.52 L682.5,140.53 L683.0,140.54 L683.5,140.54 L684.0,140.55 L684.5,140.55 L685.0,140.56 L685.5,140.56 L686.0,140.57 L686.5,140.57 L687.0,140.58 L687.5,140.58 L688.0,140.59 L688.5,140.59 L689.0,140.60 L689.5,140.60 L690.0,140.61 L690.5,140.61 L691.0,140.61 L691.5,140.62 L692.0,140.62 L692.5,140.63 L693.0,140.63 L693.5,140.63 L694.0,140.64 L694.5,140.64 L695.0,140.64 L695.5,140.65 L696.0,140.65 L696.5,140.65 L697.0,140.66 L697.5,140.66 L698.0,140.66 L698.5,140.66 L699.0,140.67 L699.5,140.67 L700.0,140.67 L700.5,140.67 L701.0,140.68 L701.5,140.68 L702.0,140.68 L702.5,140.68 L703.0,140.69 L703.5,140.69 L704.0,140.69 L704.5,140.69 L705.0,140.69 L705.5,140.70 L706.0,140.70 L706.5,140.70 L707.0,140.70 L707.5,140.70 L708.0,140.70 L708.5,140.70 L709.0,140.71 L709.5,140.71 L710.0,140.71 L710.5,140.71 L711.0,140.71 L711.5,140.71 L712.0,140.71 L712.5,140.71 L713.0,140.71 L713.5,140.72 L714.0,140.72 L714.5,140.72 L715.0,140.72 L715.5,140.72 L716.0,140.72 L716.5,140.72 L717.0,140.72 L717.5,140.72 L718.0,140.72 L718.5,140.72 L719.0,140.72 L719.5,140.72 L720.0,140.72 L720.5,140.72 L721.0,140.72 L721.5,140.72 L722.0,140.72 L722.5,140.72 L723.0,140.72 L723.5,140.72 L724.0,140.72 L724.5,140.72 L725.0,140.72 L725.5,140.72 L726.0,140.72 L726.5,140.72 L727.0,140.72 L727.5,140.72 L728.0,140.72 L728.5,140.72 L729.0,140.72 L729.5,140.72 L730.0,140.72 L730.5,140.72 L731.0,140.72 L731.5,140.72 L732.0,140.72 L732.5,140.72 L733.0,140.72 L733.5,140.72 L734.0,140.72 L734.5,140.72 L735.0,140.72 L735.5,140.71 L736.0,140.71 L736.5,140.71 L737.0,140.71 L737.5,140.71 L738.0,140.71 L738.5,140.71 L739.0,140.71 L739.5,140.71 L740.0,140.71 L740.5,140.71 L741.0,140.71 L741.5,140.71 L742.0,140.70 L742.5,140.70 L743.0,140.70 L743.5,140.70 L744.0,140.70 L744.5,140.70 L745.0,140.70 L745.5,140.70 L746.0,140.70 L746.5,140.70 L747.0,140.69 L747.5,140.69 L748.0,140.69 L748.5,140.69 L749.0,140.69 L749.5,140.69 L750.0,140.69 L750.5,140.69 L751.0,140.68 L751.5,140.68 L752.0,140.68 L752.5,140.68 L753.0,140.68 L753.5,140.68 L754.0,140.68 L754.5,140.68 L755.0,140.67 L755.5,140.67 L756.0,140.67 L756.5,140.67 L757.0,140.67 L757.5,140.67 L758.0,140.67 L758.5,140.67 L759.0,140.66 L759.5,140.66 L760.0,140.66 L760.5,140.66 L761.0,140.66 L761.5,140.66 L762.0,140.66 L762.5,140.65 L763.0,140.65 L763.5,140.65 L764.0,140.65 L764.5,140.65 L765.0,140.65 L765.5,140.65 L766.0,140.64 L766.5,140.64 L767.0,140.64 L767.5,140.64 L768.0,140.64 L768.5,140.64 L769.0,140.63 L769.5,140.63 L770.0,140.63 L770.5,140.63 L771.0,140.63 L771.5,140.63 L772.0,140.63 L772.5,140.62 L773.0,140.62 L773.5,140.62 L774.0,140.62 L774.5,140.62 L775.0,140.62 L775.5,140.61 L776.0,140.61 L776.5,140.61 L777.0,140.61 L777.5,140.61 L778.0,140.61 L778.5,140.60 L779.0,140.60 L779.5,140.60 L780.0,140.60 L780.5,140.60 L781.0,140.60 L781.5,140.60 L782.0,140.61 L782.5,140.61 L783.0,140.61 L783.5,140.61 L784.0,140.61 L784.5,140.61 L785.0,140.62 L785.5,140.62 L786.0,140.62 L786.5,140.62 L787.0,140.62 L787.5,140.62 L788.0,140.63 L788.5,140.63 L789.0,140.63 L789.5,140.63 L790.0,140.63 L790.5,140.63 L791.0,140.64 L791.5,140.64 L792.0,140.64 L792.5,140.64 L793.0,140.64 L793.5,140.64 L794.0,140.64 L794.5,140.65 L795.0,140.65 L795.5,140.65 L796.0,140.65 L796.5,140.65 L797.0,140.65 L797.5,140.66 L798.0,140.66 L798.5,140.66 L799.0,140.66 L799.5,140.66 L800.0,140.66 L800.5,140.66 L801.0,140.67 L801.5,140.67 L802.0,140.67 L802.5,140.67 L803.0,140.67 L803.5,140.67 L804.0,140.68 L804.5,140.68 L805.0,140.68 L805.5,140.68 L806.0,140.68 L806.5,140.68 L807.0,140.69 L807.5,140.69 L808.0,140.69 L808.5,140.69 L809.0,140.69 L809.5,140.69 L810.0,140.69 L810.5,140.70 L811.0,140.70 L811.5,140.70 L812.0,140.70 L812.5,140.70 L813.0,140.70 L813.5,140.71 L814.0,140.71 L814.5,140.71 L815.0,140.71 L815.5,140.71 L816.0,140.71 L816.5,140.72 L817.0,140.72 L817.5,140.72 L818.0,140.72 L818.5,140.72 L819.0,140.72 L819.5,140.72 L820.0,140.73 L820.5,140.73 L821.0,140.73 L821.5,140.73 L822.0,140.73 L822.5,140.73 L823.0,140.74 L823.5,140.74 L824.0,140.74 L824.5,140.74 L825.0,140.74 L825.5,140.74 L826.0,140.75 L826.5,140.75 L827.0,140.75 L827.5,140.75 L828.0,140.75 L828.5,140.75 L829.0,140.76 L829.5,140.76 L830.0,140.76 L830.5,140.76 L831.0,140.76 L831.5,140.76 L832.0,140.77 L832.5,140.77 L833.0,140.77 L833.5,140.77 L834.0,140.77 L834.5,140.77 L835.0,140.78 L835.5,140.78 L836.0,140.78 L836.5,140.78 L837.0,140.78 L837.5,140.79 L838.0,140.79 L838.5,140.79 L839.0,140.79 L839.5,140.79 L840.0,140.79 L840.5,140.80 L841.0,140.80 L841.5,140.80 L842.0,140.80 L842.5,140.80 L843.0,140.80 L843.5,140.81 L844.0,140.81 L844.5,140.81 L845.0,140.81 L845.5,140.81 L846.0,140.82 L846.5,140.82 L847.0,140.82 L847.5,140.82 L848.0,140.82 L848.5,140.82 L849.0,140.83 L849.5,140.83 L850.0,140.83 L850.5,140.83 L851.0,140.83 L851.5,140.84 L852.0,140.84 L852.5,140.84 L853.0,140.84 L853.5,140.84 L854.0,140.85 L854.5,140.85 L855.0,140.85 L855.5,140.85 L856.0,140.85 L856.5,140.86 L857.0,140.86 L857.5,140.86 L858.0,140.86 L858.5,140.86 L859.0,140.87 L859.5,140.87 L860.0,140.87 L860.5,140.87 L861.0,140.88 L861.5,140.88 L862.0,140.88 L862.5,140.88 L863.0,140.88 L863.5,140.89 L864.0,140.89 L864.5,140.89 L865.0,140.89 L865.5,140.90 L866.0,140.90 L866.5,140.90 L867.0,140.90 L867.5,140.90 L868.0,140.91 L868.5,140.91 L869.0,140.91 L869.5,140.91 L870.0,140.92 L870.5,140.92 L871.0,140.92 L871.5,140.92 L872.0,140.93 L872.5,140.93 L873.0,140.93 L873.5,140.93 L874.0,140.94 L874.5,140.94 L875.0,140.94 L875.5,140.95 L876.0,140.95 L876.5,140.95 L877.0,140.95 L877.5,140.96 L878.0,140.96 L878.5,140.96 L879.0,140.97 L879.5,140.97 L880.0,140.97 L880.5,140.98 L881.0,140.98 L881.5,140.98 L882.0,140.99 L882.5,140.99 L883.0,140.99 L883.5,141.00 L884.0,141.00 L884.5,141.00 L885.0,141.01 L885.5,141.01 L886.0,141.02 L886.5,141.02 L887.0,141.03 L887.5,141.03 L888.0,141.04 L888.5,141.04 L889.0,141.05 L889.5,141.05 L890.0,141.06 L890.5,141.06 L891.0,141.07 L891.5,141.08 L892.0,141.08 L892.5,141.09 L893.0,141.09 L893.5,141.10 L894.0,141.11 L894.5,141.11 L895.0,141.12 L895.5,141.13 L896.0,141.13 L896.5,141.14 L897.0,141.15 L897.5,141.16 L898.0,141.17 L898.5,141.17 L899.0,141.18 L899.5,141.19 L900.0,141.20 L900.5,141.21 L901.0,141.22 L901.5,141.23 L902.0,141.24 L902.5,141.25 L903.0,141.26 L903.5,141.27 L904.0,141.28 L904.5,141.30 L905.0,141.31 L905.5,141.32 L906.0,141.34 L906.5,141.35 L907.0,141.37 L907.5,141.38 L908.0,141.40 L908.5,141.42 L909.0,141.44 L909.5,141.46 L910.0,141.48 L910.5,141.50 L911.0,141.53 L911.5,141.55 L912.0,141.58 L912.5,141.61 L913.0,141.64 L913.5,141.67 L914.0,141.71 L914.5,141.74 L915.0,141.78 L915.5,141.82 L916.0,141.87 L916.5,141.92 L917.0,141.97 L917.5,142.03 L918.0,142.09 L918.5,142.16 L919.0,142.23 L919.5,142.31 L920.0,142.40 L920.5,142.53 L921.0,142.67 L921.5,142.81 L922.0,142.98 L922.5,143.15 L923.0,143.34 L923.5,143.55 L924.0,143.79 L924.5,144.04 L925.0,144.33 L925.5,144.65 L926.0,145.00 L926.5,145.21 L927.0,145.48 L927.5,145.79 L928.0,146.16 L928.5,146.60 L929.0,147.09 L929.5,147.64 L930.0,148.23 L930.5,148.84 L931.0,149.52 L931.5,150.27 L932.0,150.88 L932.5,151.29 L933.0,151.47 L933.5,151.40 L934.0,151.15 L934.5,150.72 L935.0,150.17 L935.5,149.56 L936.0,148.94 L936.5,148.34 L937.0,147.62 L937.5,146.72 L938.0,145.88 L938.5,145.10 L939.0,144.37 L939.5,143.70 L940.0,143.07 L940.5,142.54 L941.0,142.24 L941.5,141.98 L942.0,141.74 L942.5,141.52 L943.0,141.33 L943.5,141.16 L944.0,141.00 L944.5,140.92 L945.0,140.85 L945.5,140.79 L946.0,140.75 L946.5,140.71 L947.0,140.68 L947.5,140.65 L948.0,140.63 L948.5,140.62 L949.0,140.61 L949.5,140.60 L950.0,140.60 L950.5,140.56 L951.0,140.53 L951.5,140.50 L952.0,140.47 L952.5,140.45 L953.0,140.42 L953.5,140.40 L954.0,140.38 L954.5,140.36 L955.0,140.35 L955.5,140.33 L956.0,140.32 L956.5,140.30 L957.0,140.29 L957.5,140.28 L958.0,140.27 L958.5,140.26 L959.0,140.25 L959.5,140.25 L960.0,140.24 L960.5,140.23 L961.0,140.23 L961.5,140.22 L962.0,140.22 L962.5,140.21 L963.0,140.21 L963.5,140.21 L964.0,140.20 L964.5,140.20 L965.0,140.20 L965.5,140.20 L966.0,140.19 L966.5,140.19 L967.0,140.19 L967.5,140.19 L968.0,140.19 L968.5,140.19 L969.0,140.19 L969.5,140.19 L970.0,140.19 L970.5,140.19 L971.0,140.19 L971.5,140.19 L972.0,140.19 L972.5,140.20 L973.0,140.20 L973.5,140.20 L974.0,140.20" stroke="#000080" stroke-width="3" fill="none" stroke-linejoin="round" clip-path="url(#pc)"/><line x1="942.3" y1="48.0" x2="942.3" y2="252.5" stroke="#ff00ff" stroke-width="1.5"/><line x1="366" y1="17.5" x2="393" y2="17.5" stroke="#000080" stroke-width="3"/><line x1="366" y1="33.5" x2="393" y2="33.5" stroke="#ff00ff" stroke-width="1.5"/></svg>
<span class="t" style="left:395.5px;top:11px;font-size:12.2px;color:#222;font-weight:normal;font-style:normal;">SPL at 77 W</span>
<span class="t" style="left:395.5px;top:28px;font-size:12.2px;color:#222;font-weight:normal;font-style:normal;">Piston range</span>
<span class="t" style="left:623.5px;top:12px;font-size:15.8px;color:#000;font-weight:bold;font-style:normal;transform:scaleY(1.07);transform-origin:0 13px;">Vented Box</span>
<span class="t" style="left:818px;top:15px;font-size:13.3px;color:#222;font-weight:normal;font-style:normal;">1x Beyma NMFW6-8 meas</span>
<span class="t" style="left:300px;top:248px;font-size:10.5px;color:#222;font-weight:normal;font-style:normal;width:63.5px;text-align:right;">70.0</span>
<span class="t" style="left:300px;top:213px;font-size:10.5px;color:#222;font-weight:normal;font-style:normal;width:63.5px;text-align:right;">80.0</span>
<span class="t" style="left:300px;top:179px;font-size:10.5px;color:#222;font-weight:normal;font-style:normal;width:63.5px;text-align:right;">90.0</span>
<span class="t" style="left:300px;top:145px;font-size:10.5px;color:#222;font-weight:normal;font-style:normal;width:63.5px;text-align:right;">100.0</span>
<span class="t" style="left:300px;top:111px;font-size:10.5px;color:#222;font-weight:normal;font-style:normal;width:63.5px;text-align:right;">110.0</span>
<span class="t" style="left:300px;top:77px;font-size:10.5px;color:#222;font-weight:normal;font-style:normal;width:63.5px;text-align:right;">120.0</span>
<span class="t" style="left:300px;top:43px;font-size:10.5px;color:#222;font-weight:normal;font-style:normal;width:63.5px;text-align:right;">130.0</span>
<span class="t" style="left:332.5px;top:261px;font-size:10.5px;color:#222;font-weight:normal;font-style:normal;width:80px;text-align:center;">10.0</span>
<span class="t" style="left:633.25px;top:261px;font-size:10.5px;color:#222;font-weight:normal;font-style:normal;width:80px;text-align:center;">100.0</span>
<span class="t" style="left:934.0px;top:261px;font-size:10.5px;color:#222;font-weight:normal;font-style:normal;width:80px;text-align:center;">1000.0</span>
<div style="left:331px;top:296px;width:304px;height:147px;background:#c0c0c0;border:1px solid #333;"></div>
<div style="left:332px;top:318px;width:304px;height:20px;background:#fff;"></div>
<div style="left:331px;top:317px;width:306px;height:1px;background:#2e2e2e;"></div>
<div style="left:331px;top:338px;width:306px;height:1px;background:#2e2e2e;"></div>
<span class="t" style="left:334.5px;top:320px;font-size:15.55px;color:#000;font-weight:bold;font-style:normal;transform:scaleY(1.07);transform-origin:0 13px;">Damping</span>
<div style="left:437px;top:314px;width:110px;height:24px;background:#fff;border-top:2px solid #808080;border-left:2px solid #808080;border-right:1px solid #fff;border-bottom:1px solid #fff;"></div>
<div style="left:524px;top:316px;width:23px;height:22px;background:#f0f0f0;border-right:1px solid #404040;border-bottom:1px solid #404040;"></div>
<svg style="left:530px;top:324px" width="13" height="7" viewBox="0 0 13 7"><path d="M0 0 L13 0 L6.5 7 Z" fill="#000"/></svg>
<span class="t" style="left:441.5px;top:323px;font-size:11px;color:#222;font-weight:normal;font-style:normal;">Heavy fill</span>
<div style="left:564px;top:315px;width:57px;height:25px;background:#efefef;border-right:1px solid #6a6a6a;border-bottom:1px solid #6a6a6a;border-top:1px solid #f9f9f9;border-left:1px solid #f9f9f9;"></div>
<span class="t" style="left:572.3px;top:321px;font-size:15.8px;color:#000;font-weight:bold;font-style:normal;transform:scaleY(1.07);transform-origin:0 13px;">Recal</span>
<div style="left:332px;top:360px;width:304px;height:20px;background:#fff;"></div>
<div style="left:331px;top:359px;width:306px;height:1px;background:#2e2e2e;"></div>
<div style="left:331px;top:380px;width:306px;height:1px;background:#2e2e2e;"></div>
<span class="t" style="left:334.5px;top:362px;font-size:15.55px;color:#000;font-weight:bold;font-style:normal;transform:scaleY(1.07);transform-origin:0 13px;">Leakage</span>
<div style="left:437px;top:356px;width:110px;height:24px;background:#fff;border-top:2px solid #808080;border-left:2px solid #808080;border-right:1px solid #fff;border-bottom:1px solid #fff;"></div>
<div style="left:524px;top:358px;width:23px;height:22px;background:#f0f0f0;border-right:1px solid #404040;border-bottom:1px solid #404040;"></div>
<svg style="left:530px;top:366px" width="13" height="7" viewBox="0 0 13 7"><path d="M0 0 L13 0 L6.5 7 Z" fill="#000"/></svg>
<span class="t" style="left:441.5px;top:365px;font-size:11px;color:#222;font-weight:normal;font-style:normal;">No leaks</span>
<div style="left:564px;top:357px;width:57px;height:25px;background:#efefef;border-right:1px solid #6a6a6a;border-bottom:1px solid #6a6a6a;border-top:1px solid #f9f9f9;border-left:1px solid #f9f9f9;"></div>
<span class="t" style="left:572.3px;top:363px;font-size:15.8px;color:#000;font-weight:bold;font-style:normal;transform:scaleY(1.07);transform-origin:0 13px;">Recal</span>
<div style="left:332px;top:402px;width:304px;height:21px;background:#fff;"></div>
<div style="left:331px;top:401px;width:306px;height:1px;background:#2e2e2e;"></div>
<div style="left:331px;top:423px;width:306px;height:1px;background:#2e2e2e;"></div>
<span class="t" style="left:334.5px;top:404px;font-size:15.55px;color:#000;font-weight:bold;font-style:normal;transform:scaleY(1.07);transform-origin:0 13px;">Port type</span>
<div style="left:437px;top:398px;width:110px;height:24px;background:#fff;border-top:2px solid #808080;border-left:2px solid #808080;border-right:1px solid #fff;border-bottom:1px solid #fff;"></div>
<div style="left:524px;top:400px;width:23px;height:22px;background:#f0f0f0;border-right:1px solid #404040;border-bottom:1px solid #404040;"></div>
<svg style="left:530px;top:408px" width="13" height="7" viewBox="0 0 13 7"><path d="M0 0 L13 0 L6.5 7 Z" fill="#000"/></svg>
<span class="t" style="left:441.5px;top:407px;font-size:11px;color:#222;font-weight:normal;font-style:normal;">One flared end</span>
<div style="left:564px;top:399px;width:57px;height:25px;background:#efefef;border-right:1px solid #6a6a6a;border-bottom:1px solid #6a6a6a;border-top:1px solid #f9f9f9;border-left:1px solid #f9f9f9;"></div>
<span class="t" style="left:572.3px;top:405px;font-size:15.8px;color:#000;font-weight:bold;font-style:normal;transform:scaleY(1.07);transform-origin:0 13px;">Recal</span>
<div style="left:331px;top:296px;width:1px;height:148px;background:#2e2e2e;"></div>
<div style="left:636px;top:296px;width:1px;height:148px;background:#2e2e2e;"></div>
<div style="left:663px;top:296px;width:336px;height:147px;background:#c0c0c0;border:1px solid #333;border-right:none;"></div>
<div style="left:664px;top:318px;width:336px;height:20px;background:#fff;"></div>
<div style="left:663px;top:317px;width:338px;height:1px;background:#2e2e2e;"></div>
<div style="left:663px;top:338px;width:338px;height:1px;background:#2e2e2e;"></div>
<span class="t" style="left:665.5px;top:320px;font-size:15.55px;color:#000;font-weight:bold;font-style:normal;transform:scaleY(1.07);transform-origin:0 13px;">Graphs updated</span>
<div style="left:905px;top:315px;width:81px;height:25px;background:#efefef;border-right:1px solid #6a6a6a;border-bottom:1px solid #6a6a6a;border-top:1px solid #f9f9f9;border-left:1px solid #f9f9f9;"></div>
<span class="t" style="left:919.5px;top:321px;font-size:15.8px;color:#000;font-weight:bold;font-style:normal;transform:scaleY(1.07);transform-origin:0 13px;">Update</span>
<div style="left:664px;top:360px;width:336px;height:20px;background:#fff;"></div>
<div style="left:663px;top:359px;width:338px;height:1px;background:#2e2e2e;"></div>
<div style="left:663px;top:380px;width:338px;height:1px;background:#2e2e2e;"></div>
<span class="t" style="left:665.5px;top:362px;font-size:15.55px;color:#000;font-weight:bold;font-style:normal;transform:scaleY(1.07);transform-origin:0 13px;">Frequency response</span>
<div style="left:905px;top:357px;width:81px;height:25px;background:#efefef;border-right:1px solid #6a6a6a;border-bottom:1px solid #6a6a6a;border-top:1px solid #f9f9f9;border-left:1px solid #f9f9f9;"></div>
<span class="t" style="left:919.5px;top:363px;font-size:15.8px;color:#000;font-weight:bold;font-style:normal;transform:scaleY(1.07);transform-origin:0 13px;">Update</span>
<div style="left:663px;top:401px;width:337px;height:1px;background:#2e2e2e;"></div>
<div style="left:663px;top:423px;width:337px;height:1px;background:#2e2e2e;"></div>
<div style="left:663px;top:296px;width:1px;height:148px;background:#2e2e2e;"></div>
<div style="left:331px;top:465px;width:304px;height:125px;background:#c0c0c0;border:1px solid #333;"></div>
<div style="left:332px;top:487px;width:304px;height:20px;background:#fff;"></div>
<div style="left:331px;top:486px;width:306px;height:1px;background:#2e2e2e;"></div>
<div style="left:331px;top:507px;width:306px;height:1px;background:#2e2e2e;"></div>
<div style="left:332px;top:487px;width:169px;height:20px;background:#c0c0c0;"></div>
<div style="left:495px;top:487px;width:0;height:0;border-top:6px solid #ff0000;border-left:6px solid transparent;"></div>
<span class="t" style="left:334.5px;top:489px;font-size:15.55px;color:#000;font-weight:bold;font-style:normal;transform:scaleY(1.07);transform-origin:0 13px;">Wanted tuning peak</span>
<span class="t" style="left:545.5px;top:489px;font-size:15.6px;color:#3333cc;font-weight:bold;font-style:normal;transform:scaleY(1.07);transform-origin:0 13px;letter-spacing:0.2px;">0.00 dB</span>
<div style="left:332px;top:529px;width:304px;height:20px;background:#fff;"></div>
<div style="left:331px;top:528px;width:306px;height:1px;background:#2e2e2e;"></div>
<div style="left:331px;top:549px;width:306px;height:1px;background:#2e2e2e;"></div>
<span class="t" style="left:334.5px;top:531px;font-size:15.55px;color:#000;font-weight:bold;font-style:normal;transform:scaleY(1.07);transform-origin:0 13px;">Optimise Fb for wanted peak</span>
<div style="left:564px;top:526px;width:57px;height:25px;background:#efefef;border-right:1px solid #6a6a6a;border-bottom:1px solid #6a6a6a;border-top:1px solid #f9f9f9;border-left:1px solid #f9f9f9;"></div>
<span class="t" style="left:575px;top:532px;font-size:15.8px;color:#000;font-weight:bold;font-style:normal;transform:scaleY(1.07);transform-origin:0 13px;">Start</span>
<div style="left:331px;top:465px;width:1px;height:100px;background:#2e2e2e;"></div>
<div style="left:636px;top:465px;width:1px;height:100px;background:#2e2e2e;"></div>
<div style="left:663px;top:465px;width:336px;height:125px;background:#c0c0c0;border:1px solid #333;border-right:none;"></div>
<div style="left:664px;top:487px;width:336px;height:20px;background:#fff;"></div>
<div style="left:663px;top:486px;width:338px;height:1px;background:#2e2e2e;"></div>
<div style="left:663px;top:507px;width:338px;height:1px;background:#2e2e2e;"></div>
<span class="t" style="left:665.5px;top:489px;font-size:15.55px;color:#000;font-weight:bold;font-style:normal;transform:scaleY(1.07);transform-origin:0 13px;">Export frequency response</span>
<div style="left:905px;top:482px;width:81px;height:25px;background:#efefef;border-right:1px solid #6a6a6a;border-bottom:1px solid #6a6a6a;border-top:1px solid #f9f9f9;border-left:1px solid #f9f9f9;"></div>
<span class="t" style="left:930px;top:490px;font-size:15.8px;color:#000;font-weight:bold;font-style:normal;transform:scaleY(1.07);transform-origin:0 13px;">FRD</span>
<div style="left:664px;top:529px;width:336px;height:20px;background:#fff;"></div>
<div style="left:663px;top:528px;width:338px;height:1px;background:#2e2e2e;"></div>
<div style="left:663px;top:549px;width:338px;height:1px;background:#2e2e2e;"></div>
<span class="t" style="left:665.5px;top:531px;font-size:15.55px;color:#000;font-weight:bold;font-style:normal;transform:scaleY(1.07);transform-origin:0 13px;">Export speaker impedance</span>
<div style="left:905px;top:525px;width:81px;height:25px;background:#efefef;border-right:1px solid #6a6a6a;border-bottom:1px solid #6a6a6a;border-top:1px solid #f9f9f9;border-left:1px solid #f9f9f9;"></div>
<span class="t" style="left:930px;top:532px;font-size:15.8px;color:#000;font-weight:bold;font-style:normal;transform:scaleY(1.07);transform-origin:0 13px;">ZDA</span>
<div style="left:663px;top:465px;width:1px;height:100px;background:#2e2e2e;"></div>
<div style="left:0px;top:0px;width:1000px;height:1px;background:#333;"></div>
</body></html>
